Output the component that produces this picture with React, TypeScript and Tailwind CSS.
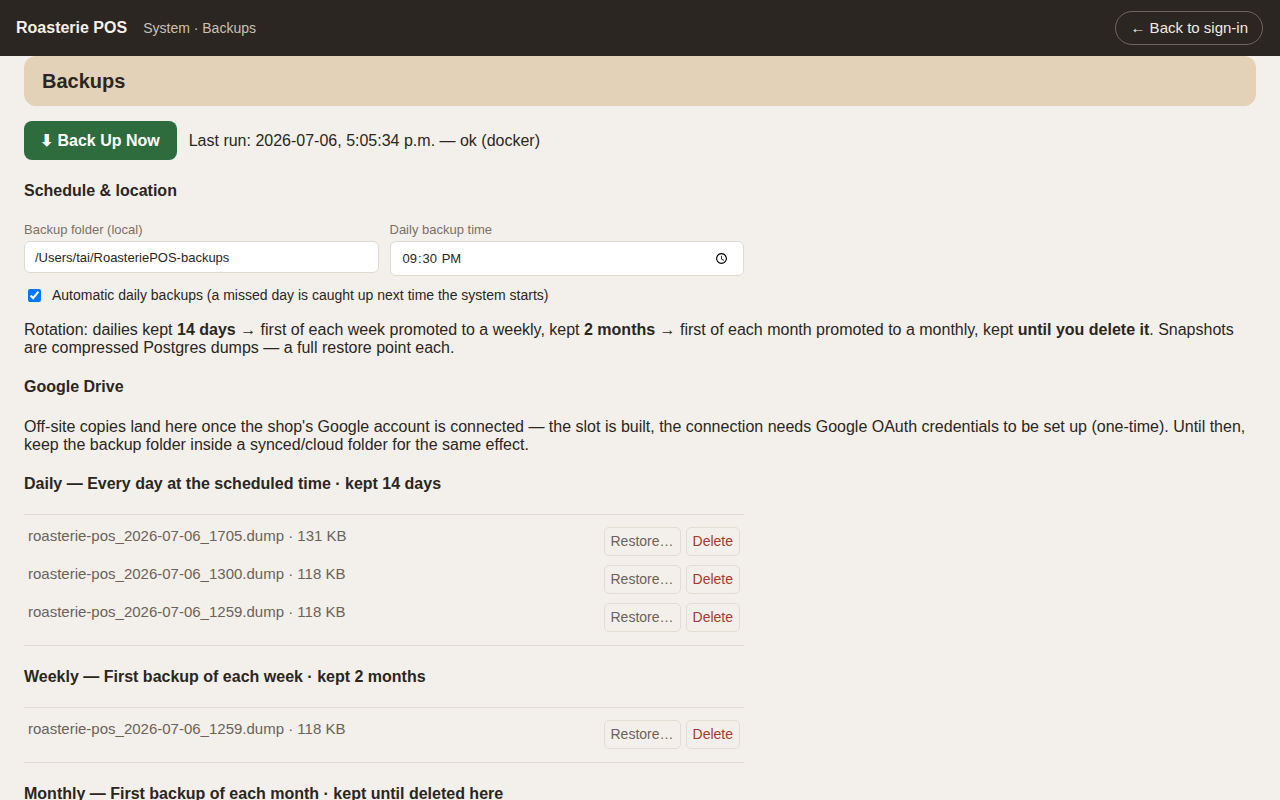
import React from "react";

const daily = [
	{ name: "roasterie-pos_2026-07-06_1705.dump", size: "131 KB" },
	{ name: "roasterie-pos_2026-07-06_1300.dump", size: "118 KB" },
	{ name: "roasterie-pos_2026-07-06_1259.dump", size: "118 KB" },
];

const weekly = [{ name: "roasterie-pos_2026-07-06_1259.dump", size: "118 KB" }];

const monthly = [{ name: "roasterie-pos_2026-07-06_1259.dump", size: "118 KB" }];

function FileRow({ name, size }: { name: string; size: string }) {
	return (
		<div className="flex items-start justify-between py-[4.5px] pl-1 pr-1">
			<span className="text-[15px] leading-[17px] text-[#6b6259]">
				{name} · {size}
			</span>
			<div className="flex gap-[5px]">
				<button className="h-[29px] rounded-[5px] border border-[#e3dcd2] px-[6px] text-[14px] text-[#6b6259]">
					Restore…
				</button>
				<button className="h-[29px] rounded-[5px] border border-[#e3dcd2] px-[6px] text-[14px] text-[#a63a2b]">
					Delete
				</button>
			</div>
		</div>
	);
}

function Tier({
	title,
	files,
	first,
}: {
	title: string;
	files: { name: string; size: string }[];
	first?: boolean;
}) {
	return (
		<div>
			<h3
				className={
					first
						? "mt-[20px] text-[16px] font-bold leading-[18px]"
						: "mt-[22px] text-[16px] font-bold leading-[18px]"
				}
			>
				{title}
			</h3>
			<div className="mt-[21px] w-[720px] border-y border-[#e2dbd1] py-2">
				{files.map((f, i) => (
					<FileRow key={i} name={f.name} size={f.size} />
				))}
			</div>
		</div>
	);
}

export default function App() {
	return (
		<div
			className="min-h-screen bg-[#f3f0eb] text-[#2b2621]"
			style={{ fontFamily: '"Liberation Sans", Arial, sans-serif' }}
		>
			<header className="flex h-14 items-center justify-between bg-[#2b2621] pl-4 pr-[17px]">
				<div className="flex items-center">
					<span className="text-[16px] font-bold text-[#f5f1ea]">Roasterie POS</span>
					<span className="ml-4 text-[14px] text-[#c9c1b6]">System · Backups</span>
				</div>
				<button className="h-[34px] rounded-full border border-[#6e665c] px-[14px] text-[15px] text-[#f0ebe3]">
					← Back to sign-in
				</button>
			</header>

			<main className="px-6 pb-10">
				<div className="flex h-[50px] items-center rounded-xl bg-[#e3d2b7] px-[18px]">
					<h1 className="text-[20px] font-bold">Backups</h1>
				</div>

				<div className="mt-[15px] flex items-center gap-3">
					<button className="h-[39px] rounded-lg bg-[#2e6b3d] pl-4 pr-[17px] text-[16px] font-bold text-white">
						⬇ Back Up Now
					</button>
					<span className="text-[16px]">
						Last run: 2026-07-06, 5:05:34 p.m. — ok (docker)
					</span>
				</div>

				<h3 className="mt-[22px] text-[16px] font-bold leading-[18px]">
					Schedule &amp; location
				</h3>

				<div className="mt-[22px] grid w-[720px] grid-cols-2 items-start gap-x-[11px]">
					<label className="flex flex-col">
						<span className="text-[13px] leading-[15px] text-[#7a7065]">
							Backup folder (local)
						</span>
						<input
							className="mt-1 h-8 rounded-md border border-[#e0d9cf] bg-white px-[10px] text-[13px] text-[#2b2621] outline-none"
							defaultValue="/Users/tai/RoasteriePOS-backups"
						/>
					</label>
					<label className="flex flex-col">
						<span className="text-[13px] leading-[15px] text-[#7a7065]">
							Daily backup time
						</span>
						<input
							type="time"
							className="mt-1 h-[35px] rounded-md border border-[#e0d9cf] bg-white px-[11px] text-[13px] text-[#2b2621] outline-none"
							defaultValue="21:30"
						/>
					</label>
				</div>

				<label className="mt-[11px] flex items-center pl-1 text-[14px] leading-4">
					<input type="checkbox" defaultChecked className="h-[13px] w-[13px]" />
					<span className="ml-[11px]">
						Automatic daily backups (a missed day is caught up next time the system starts)
					</span>
				</label>

				<p className="mt-[18px] text-[16px] leading-[18.4px]">
					Rotation: dailies kept <b>14 days</b> → first of each week promoted to a weekly,
					kept <b>2 months</b> → first of each month promoted to a monthly, kept{" "}
					<b>until you delete it</b>. Snapshots are compressed Postgres dumps — a full
					restore point each.
				</p>

				<h3 className="mt-[20px] text-[16px] font-bold leading-[18px]">Google Drive</h3>

				<p className="mt-[22px] text-[16px] leading-[18.4px]">
					Off-site copies land here once the shop's Google account is connected — the slot
					is built, the connection needs Google OAuth credentials to be set up (one-time).
					Until then, keep the backup folder inside a synced/cloud folder for the same
					effect.
				</p>

				<Tier
					first
					title="Daily — Every day at the scheduled time · kept 14 days"
					files={daily}
				/>
				<Tier title="Weekly — First backup of each week · kept 2 months" files={weekly} />
				<Tier
					title="Monthly — First backup of each month · kept until deleted here"
					files={monthly}
				/>
			</main>
		</div>
	);
}
